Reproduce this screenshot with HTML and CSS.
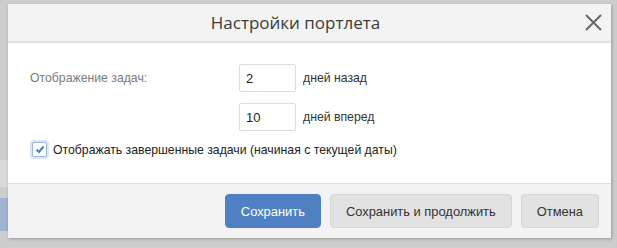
FILE: index.html
```html
<!DOCTYPE html>
<html lang="ru">

<head>
    <meta charset="UTF-8">
    <meta name="viewport" content="width=device-width, initial-scale=1.0">
    <title>Настройки портлета</title>
    <link rel="stylesheet" href="styles.css">
</head>

<body>
    <div class="page">
        <div class="side_band"></div>
        <div class="side_tab"></div>

        <div class="dialog">
            <div class="dialog_head">
                <h3 class="dialog_title">Настройки портлета</h3>
                <span class="dialog_close">
                    <svg width="17" height="17" viewBox="0 0 17 17">
                        <path d="M1 1L16 16M16 1L1 16" stroke="#666" stroke-width="2" fill="none" />
                    </svg>
                </span>
            </div>

            <div class="dialog_body">
                <div class="form_row">
                    <span class="form_label">Отображение задач:</span>
                    <input class="num_input" type="text" value="2">
                    <span class="form_suffix">дней назад</span>
                </div>
                <div class="form_row">
                    <span class="form_label"></span>
                    <input class="num_input" type="text" value="10">
                    <span class="form_suffix">дней вперед</span>
                </div>
                <label class="check_row">
                    <span class="check_box">
                        <svg width="10" height="9" viewBox="0 0 10 9">
                            <path d="M1.5 4.8L4 7L8.5 1.5" stroke="#4a7cc0" stroke-width="2" fill="none" />
                        </svg>
                    </span>
                    Отображать завершенные задачи (начиная с текущей даты)
                </label>
            </div>

            <div class="dialog_foot">
                <button class="btn btn_primary">Сохранить</button>
                <button class="btn">Сохранить и продолжить</button>
                <button class="btn">Отмена</button>
            </div>
        </div>
    </div>
</body>

</html>
```

FILE: styles.css
```css
html,
body {
    margin: 0;
    padding: 0;
}

body {
    background: #cdcdcd;
    font-family: "Liberation Sans", Arial, sans-serif;
    font-size: 12.25px;
}

.page {
    position: relative;
    height: 248px;
    overflow: hidden;
}

.side_band {
    position: absolute;
    left: 0;
    top: 160px;
    width: 12px;
    height: 27px;
    background: #d9d9d9;
}

.side_tab {
    position: absolute;
    left: 0;
    top: 198px;
    width: 12px;
    height: 33px;
    background: #9fb2cf;
}

.dialog {
    position: absolute;
    left: 8px;
    top: 4px;
    width: 603px;
    background: #fff;
    box-shadow: 1px 1px 3px rgba(0, 0, 0, 0.25);
}

.dialog_head {
    position: relative;
    height: 37px;
    background: #f3f3f3;
    border-bottom: 2px solid #e1e1e1;
    display: flex;
    align-items: center;
    justify-content: center;
    padding-right: 28px;
}

.dialog_title {
    margin: 0;
    font-family: "Open Sans", sans-serif;
    font-weight: normal;
    font-size: 17px;
    color: #3a3a3a;
}

.dialog_close {
    position: absolute;
    right: 9px;
    top: 10px;
    width: 17px;
    height: 17px;
}

.dialog_body {
    height: 119px;
    padding: 21px 0 0 22px;
}

.form_row {
    display: flex;
    align-items: center;
    margin-bottom: 11px;
}

.form_label {
    width: 209px;
    color: #7a7a7a;
}

.num_input {
    width: 57px;
    height: 28px;
    box-sizing: border-box;
    border: 1px solid #dcdcdc;
    border-radius: 2px;
    padding: 0 6px;
    font-family: "Liberation Sans", Arial, sans-serif;
    font-size: 13px;
    color: #222;
    margin-right: 7px;
}

.form_suffix {
    color: #333;
}

.check_row {
    display: flex;
    align-items: center;
    margin-top: 4px;
    padding-left: 2px;
    color: #222;
}

.check_box {
    width: 13px;
    height: 13px;
    border: 1px solid #9db5d8;
    border-radius: 2px;
    background: #fff;
    box-shadow: 0 0 0 2px #dae6f6;
    display: flex;
    align-items: center;
    justify-content: center;
    margin-right: 6px;
}

.dialog_foot {
    height: 54px;
    border-top: 1px solid #dedede;
    background: #f3f3f3;
    display: flex;
    align-items: center;
    justify-content: flex-end;
    gap: 9px;
    padding-right: 12px;
}

.btn {
    height: 34px;
    padding: 0 15px;
    border: 1px solid #d6d6d6;
    border-radius: 4px;
    background: #e2e2e2;
    color: #333;
    font-family: "Liberation Sans", Arial, sans-serif;
    font-size: 12.9px;
}

.btn_primary {
    background: #4f81c2;
    border-color: #4f81c2;
    color: #fff;
}
```
